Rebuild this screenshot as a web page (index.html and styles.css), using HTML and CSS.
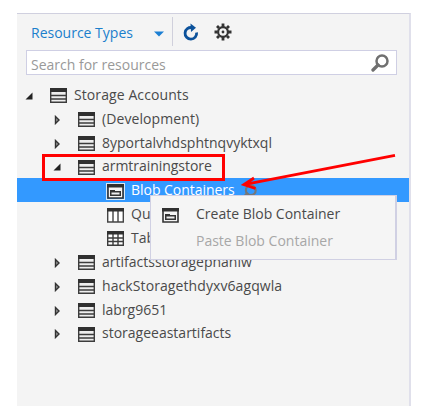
FILE: index.html
```html
<!DOCTYPE html>
<html lang="en">
<head>
<meta charset="utf-8">
<title>Resources</title>
<link rel="stylesheet" href="styles.css">
</head>
<body>
<svg class="defs" aria-hidden="true">
  <symbol id="account" viewBox="0 0 17 15"><path d="M.7 1h15.600v13.300H.7z" fill="#eee" stroke="#3c3c3c" stroke-width="1.400"/><path d="M0 0h17v4H0z" fill="#303030"/><path d="M1 7.500h15M1 11h15" stroke="#3c3c3c" stroke-width="1.300"/></symbol>
  <symbol id="blob" viewBox="0 0 17 15"><path d="M1 1h15v13H1z" fill="#f4f4f4" stroke="#333" stroke-width="1.600"/><path d="M0 0h17v3.500H0z" fill="#303030"/><path d="M3 12V6h5v1h6v5z" fill="#333"/><path d="M4.500 8.500h8v2h-8z" fill="#eee"/></symbol>
  <symbol id="queue" viewBox="0 0 17 15"><path d="M.7 1h15.600v13H.7zM6 3v11M11 3v11" fill="#fff" stroke="#444" stroke-width="1.400"/><path d="M0 0h17v3.500H0z" fill="#303030"/></symbol>
  <symbol id="table" viewBox="0 0 17 15"><path d="M.7 1h15.600v13.300H.7zM6 3v11M11 3v11M1 7h15M1 10.500h15" fill="#fff" stroke="#3c3c3c" stroke-width="1.400"/><path d="M0 0h17v3.500H0z" fill="#303030"/></symbol>
  <symbol id="open" viewBox="0 0 8 8"><path d="M7.500 .5v7H.5z" fill="#222"/></symbol>
  <symbol id="closed" viewBox="0 0 8 10"><path d="M2.500 1.500v7L6 5z" fill="#999" stroke="#333" stroke-width="1.400"/></symbol>
  <symbol id="search" viewBox="0 0 18 18"><circle cx="11" cy="7" r="5.500" fill="none" stroke="currentColor" stroke-width="2.500"/><path d="M7 11l-5 5" stroke="currentColor" stroke-width="3.300" stroke-linecap="round"/></symbol>
</svg>
<main class="panel">
  <header class="toolbar">
    <span class="types">Resource Types</span>
    <svg class="caret" viewBox="0 0 10 6"><path d="M0 .5h10L5 5.500z" fill="#1b7fd3"/></svg>
    <span class="divider"></span>
    <svg class="refresh" viewBox="0 0 16 18"><path d="M9 4.600A5.800 5.800 0 1 0 13.600 9.500" fill="none" stroke="#0c529b" stroke-width="2.800"/><path d="M7.500 .5L13 4.700 8 9z" fill="#0c529b"/></svg>
    <svg class="gear" viewBox="-9 -9 18 18"><g stroke="#333" stroke-width="2.800"><path d="M0-8.500V-5M0 8.500V5M-8.500 0h3M8.500 0H5M-6-6l2 2M6 6l-2-2M-6 6l2-2M6-6l-2 2"/></g><circle r="4.900" fill="#f4f4f4" stroke="#333" stroke-width="2.200"/><circle r="1.400" fill="#333"/></svg>
  </header>
  <div class="searchbox"><span>Search for resources</span><svg class="lens"><use href="#search"/></svg></div>
  <div class="tree">
    <div class="row root"><svg class="arrow"><use href="#open"/></svg><svg class="icon"><use href="#account"/></svg><span class="loose">Storage Accounts</span></div>
    <div class="row"><svg class="arrow shut"><use href="#closed"/></svg><svg class="icon"><use href="#account"/></svg><span class="loose">(Development)</span></div>
    <div class="row"><svg class="arrow shut"><use href="#closed"/></svg><svg class="icon"><use href="#account"/></svg><span>8yportalvhdsphtnqvyktxql</span></div>
    <div class="row"><svg class="arrow"><use href="#open"/></svg><svg class="icon"><use href="#account"/></svg><span class="tight">armtrainingstore</span><div class="highlight"></div></div>
    <div class="row child selected"><svg class="icon framed"><use href="#blob"/></svg><span class="tight">Blob Containers</span><svg class="rowlens" viewBox="0 0 18 18"><use href="#search"/></svg></div>
    <div class="row child"><svg class="icon"><use href="#queue"/></svg><span>Queues</span></div>
    <div class="row child"><svg class="icon"><use href="#table"/></svg><span>Tables</span></div>
    <div class="row"><svg class="arrow shut"><use href="#closed"/></svg><svg class="icon"><use href="#account"/></svg><span>artifactsstoragephanlw</span></div>
    <div class="row"><svg class="arrow shut"><use href="#closed"/></svg><svg class="icon"><use href="#account"/></svg><span class="loose">hackStoragethdyxv6agqwla</span></div>
    <div class="row"><svg class="arrow shut"><use href="#closed"/></svg><svg class="icon"><use href="#account"/></svg><span>labrg9651</span></div>
    <div class="row"><svg class="arrow shut"><use href="#closed"/></svg><svg class="icon"><use href="#account"/></svg><span>storageeastartifacts</span></div>
  </div>
</main>
<div class="menu">
  <div class="item"><svg class="icon"><use href="#blob"/></svg><span>Create Blob Container</span></div>
  <div class="item disabled"><span>Paste Blob Container</span></div>
</div>
<svg class="pointer" viewBox="0 0 427 420"><path d="M395 155.300L245 184.300M254 178L244 184.500l11.500 4" fill="none" stroke="#f00" stroke-width="2.900"/></svg>
</body>
</html>
```
FILE: styles.css
```css
* { box-sizing: border-box; }
body { margin: 0; padding: 13px 16px 14px 17px; height: 420px; overflow: hidden; background: #fff; font: 14px/20px "Open Sans", "Noto Sans", sans-serif; color: #4a4a4a; }
svg { display: block; flex: none; }
span { white-space: nowrap; }
.defs { position: absolute; width: 0; height: 0; }
.panel { height: 393px; background: #f4f4f4; border-top: 1px solid #d0d0df; border-right: 2px solid #e0e0eb; }
.toolbar { display: flex; align-items: center; height: 36px; padding-left: 14px; color: #1b7fcc; }
.types { width: 123px; padding-top: 2px; }
.caret { width: 10px; height: 6px; margin-top: 4px; }
.divider { width: 1px; height: 29px; margin: -2px 10px 0 8px; background: #d0d0dc; }
.refresh { width: 16px; height: 18px; }
.gear { width: 18px; height: 18px; margin-left: 15px; }
.searchbox { display: flex; align-items: center; justify-content: space-between; width: 371px; height: 25px; margin-left: 9px; padding: 4px 7px 0 4px; background: #fff; border: 1px solid #cfcfe4; color: #999; }
.lens { width: 18px; height: 18px; margin-top: -4px; color: #707070; }
.tree { padding-top: 8px; }
.row { position: relative; display: flex; align-items: center; height: 23.850px; padding-left: 36px; }
.loose { letter-spacing: .09px; }
.tight { letter-spacing: -.04px; }
.root { padding-left: 8px; }
.child { padding-left: 90px; }
.arrow { width: 8px; height: 8px; margin: 2px 17px 0 0; }
.shut { height: 10px; }
.icon { width: 17px; height: 15px; margin: 2px 7px 0 0; }
.selected { background: #3399ff; color: #fff; }
.framed { outline: 1px solid #d9e8f5; }
.rowlens { width: 16px; height: 16px; margin: 4px 0 0 6px; color: #777; }
.highlight { position: absolute; left: 25px; top: -1px; width: 183px; height: 27px; border: 3px solid #f00; z-index: 1; }
.menu { position: absolute; left: 150px; top: 195px; width: 247px; height: 65px; padding-top: 4px; background: #f5f5f5; border: 1px solid #d0d0e3; border-right-width: 2px; }
.item { display: flex; align-items: center; height: 27px; padding-left: 11px; }
.item .icon { margin: 3px 17px 0 0; }
.disabled { padding-left: 45px; color: #a7a7a7; }
.pointer { position: absolute; left: 0; top: 0; width: 427px; height: 420px; z-index: 3; }
```
